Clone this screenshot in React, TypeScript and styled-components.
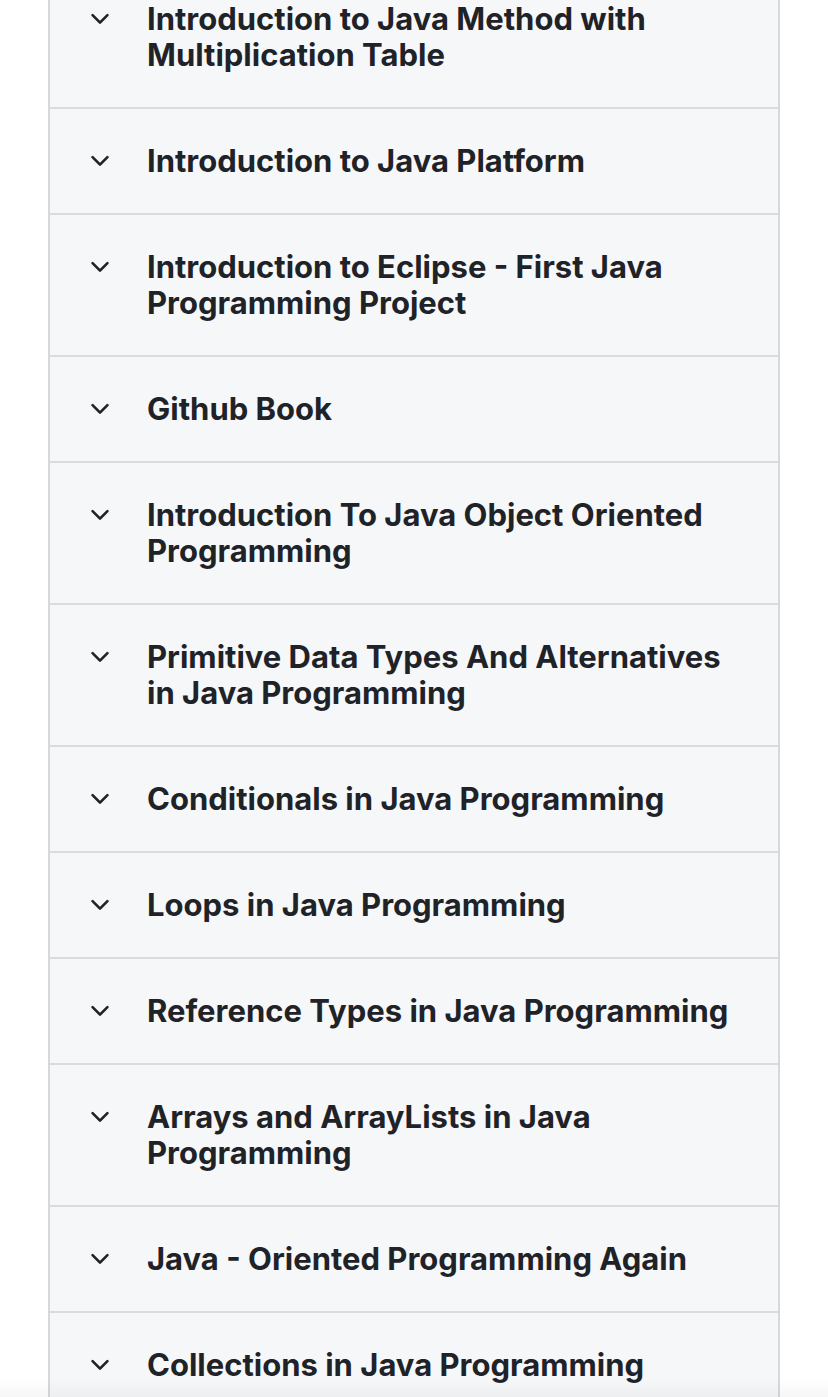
import React from 'react'
import styled, { createGlobalStyle } from 'styled-components'

const GlobalStyle = createGlobalStyle`
    html, body {
        margin: 0;
        padding: 0;
        background: #ffffff;
    }
    body {
        font-family: Inter, "Noto Sans", "Liberation Sans", sans-serif;
        overflow: hidden;
    }
`

const Page = styled.div`
    width: 828px;
    height: 1397px;
    overflow: hidden;
    position: relative;
`

const List = styled.div`
    margin: -33px 0 0 48px;
    width: 732px;
    box-sizing: border-box;
    border-left: 2px solid #d5d9de;
    border-right: 2px solid #d5d9de;
    background: #f6f7f9;
`

const Row = styled.div`
    display: flex;
    align-items: flex-start;
    padding: 34px 40px 34px 36px;
    border-bottom: 2px solid #d8dbdf;
`

const Chevron = styled.span`
    flex: 0 0 28px;
    height: 36px;
    display: flex;
    align-items: center;
    justify-content: center;
    color: #1f2328;
    margin-right: 33px;
`

const Title = styled.span`
    font-size: 31px;
    line-height: 36px;
    font-weight: 700;
    color: #1f2328;
`

const BottomFade = styled.div`
    position: absolute;
    left: 0;
    right: 0;
    bottom: 0;
    height: 18px;
    background: linear-gradient(to bottom, rgba(0, 0, 0, 0), rgba(0, 0, 0, 0.035));
    pointer-events: none;
`

const ChevronIcon = () => (
    <svg width="28" height="28" viewBox="0 0 16 16" fill="currentColor">
        <path d="M12.78 5.22a.749.749 0 0 1 0 1.06l-4.25 4.25a.749.749 0 0 1-1.06 0L3.22 6.28a.749.749 0 1 1 1.06-1.06L8 8.939l3.72-3.719a.749.749 0 0 1 1.06 0Z" />
    </svg>
)

const chapters = [
    'Introduction to Java Method with Multiplication Table',
    'Introduction to Java Platform',
    'Introduction to Eclipse - First Java Programming Project',
    'Github Book',
    'Introduction To Java Object Oriented Programming',
    'Primitive Data Types And Alternatives in Java Programming',
    'Conditionals in Java Programming',
    'Loops in Java Programming',
    'Reference Types in Java Programming',
    'Arrays and ArrayLists in Java Programming',
    'Java - Oriented Programming Again',
    'Collections in Java Programming',
]

const App = () => {
    return (
        <Page>
            <GlobalStyle />
            <List>
                {chapters.map((name) => (
                    <Row key={name}>
                        <Chevron>
                            <ChevronIcon />
                        </Chevron>
                        <Title>{name}</Title>
                    </Row>
                ))}
            </List>
            <BottomFade />
        </Page>
    )
}

export default App
